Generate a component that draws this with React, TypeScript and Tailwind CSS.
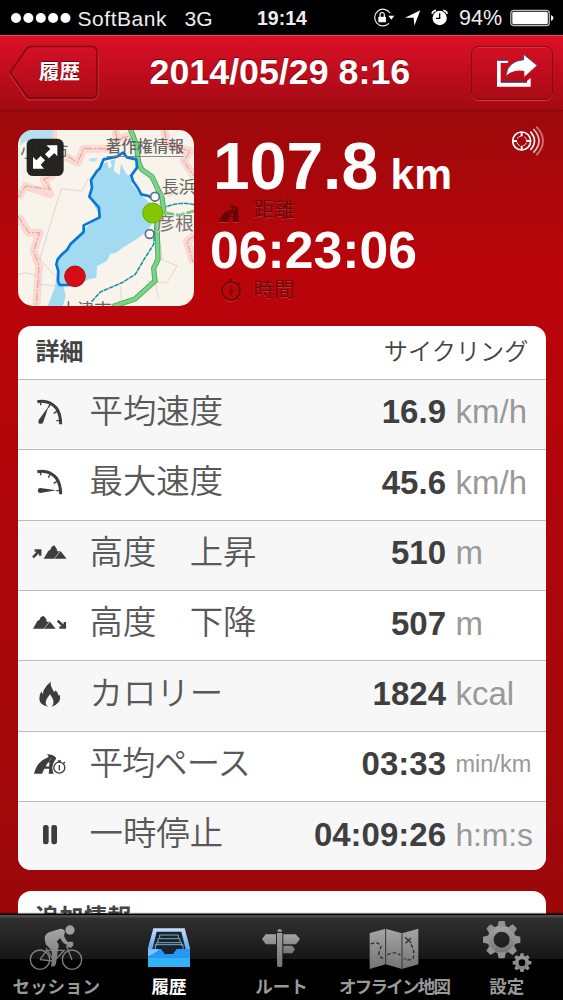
import React from "react";

const latin = "font-['Liberation_Sans','Noto_Sans_CJK_JP',sans-serif]";

function StatusBar() {
  return (
    <div className="flex h-[35px] shrink-0 items-center bg-black text-[#eeeeee]">
      <svg className="ml-[11px] h-[12px] w-[60px]" viewBox="0 0 60 12" fill="#fff">
        <circle cx="5" cy="6" r="5" />
        <circle cx="17.4" cy="6" r="5" />
        <circle cx="29.8" cy="6" r="5" />
        <circle cx="42.1" cy="6" r="5" />
        <circle cx="54.5" cy="6" r="5" />
      </svg>
      <div className="ml-[6.500px] w-[107px] pt-[2px] text-[21px] leading-[35px] tracking-[0.55px]">SoftBank</div>
      <div className="w-[72.500px] pt-[2px] text-[21px] leading-[35px]">3G</div>
      <div className="w-[115px] pt-[2px] text-[19.500px] leading-[35px] font-bold">19:14</div>
      <svg className="h-[20px] w-[78px]" viewBox="274 24 234 60">
        <path d="M328 39 A25 25 0 1 0 325 70" fill="none" stroke="#eee" strokeWidth="3.5" />
        <path d="M323 47 L341 47 L332 59Z" fill="#fff" />
        <rect x="293" y="50" width="23" height="17" rx="2" fill="#fff" />
        <path d="M298 51 V44 a6.500 6.500 0 0 1 13 0 V51" fill="none" stroke="#fff" strokeWidth="3.500" />
        <path d="M373 53 L419 31 L401 77 L399 53Z" fill="#fff" />
        <circle cx="477" cy="54" r="21.500" fill="#fff" />
        <path d="M477 40 V55 H466" fill="none" stroke="#000" strokeWidth="4" />
        <path d="M454 41 Q457 32 466 31 M488 31 Q497 32 500 41" fill="none" stroke="#fff" strokeWidth="5" />
      </svg>
      <div className="ml-[9px] w-[51px] pt-[2px] text-[21.500px] leading-[35px]">94%</div>
      <svg className="h-[18px] w-[44px]" viewBox="0 0 44 18">
        <rect x="0.8" y="1.3" width="38.5" height="15.4" rx="3" fill="none" stroke="#bbb" strokeWidth="1.3" />
        <rect x="2.300" y="2.800" width="35.500" height="12.400" rx="1.500" fill="#fff" />
        <path d="M41 6 Q43.500 7 43.500 9 T41 12Z" fill="#eee" />
      </svg>
    </div>
  );
}

function NavBar() {
  return (
    <div className="flex h-[76px] shrink-0 items-start border-t border-[#e84a5a] border-b-[1px] border-b-[#820a0f] bg-linear-to-b from-[#dc1027] to-[#a20a13]">
      <div className="mt-[9px] ml-[8px] grid h-[56px] w-[91px]">
        <svg className="h-[56px] w-[91px] [grid-area:1/1]" viewBox="0 0 91 56" fill="none">
          <defs>
            <linearGradient id="back" x1="0" y1="0" x2="0" y2="1">
              <stop offset="0" stopColor="#d51026" />
              <stop offset="1" stopColor="#aa0b15" />
            </linearGradient>
          </defs>
          <path d="M22 3 H84 Q90 3 90 9 V49 Q90 55 84 55 H22 Q19 55 17 52 L1.500 29 L17 6 Q19 3 22 3Z" stroke="#e04553" strokeOpacity="0.7" />
          <path d="M23 1.500 H83 Q89 1.500 89 7.500 V47 Q89 53 83 53 H23 Q20 53 18 50 L2 27.500 L18 4.500 Q20 1.500 23 1.500Z" fill="url(#back)" stroke="#7c0a12" strokeWidth="1.500" />
        </svg>
        <div className="z-10 pt-[13px] pl-[31px] text-[20.500px] leading-[28px] font-bold whitespace-nowrap text-white [grid-area:1/1] [text-shadow:0_-1px_1px_#77000a]">履歴</div>
      </div>
      <div className="mt-[15px] ml-[50.500px] w-[321.500px] text-[35.800px] leading-[42px] font-bold whitespace-nowrap text-white [text-shadow:0_-1px_1px_#77000a]">2014/05/29 8:16</div>
      <div className="mt-[10px] flex h-[54px] w-[82px] items-center justify-center rounded-[8px] border-[1.5px] border-[#850b13] shadow-[0_1px_0_#d03a48,inset_0_1px_0_#dc3043]">
        <svg className="mt-[-6px] ml-[9px] h-[34px] w-[42px]" viewBox="643 160 126 102">
          <path d="M681 181 H646 V261 H747 V234 L736 244 V249 H657 V190 H678Z" fill="#fff" />
          <path d="M647 182 H681 M658 246 H735" stroke="#2b416b" strokeWidth="3" />
          <path d="M673 229 Q677 184 726 180 V164 L766 197 L728 231 V214 Q695 208 673 229Z" fill="#fff" />
          <path d="M673 229 Q677 184 726 180 V164 L766 197" fill="none" stroke="#2b416b" strokeWidth="2.500" />
        </svg>
      </div>
    </div>
  );
}

function RouteMap() {
  return (
    <svg
      className="h-[176px] w-[176px] shrink-0 rounded-[15px] font-['Noto_Sans_CJK_JP',sans-serif]"
      viewBox="53 42 528 528"
    >
      <rect x="53" y="42" width="528" height="528" fill="#f8f4ec" />
      <g fill="none" strokeLinejoin="round">
        <path d="M158 42 L158 178 L130 190 L150 235 L75 210 L53 245 M195 122 L232 140 L250 98 L330 98 M53 300 L85 350 L118 350 L100 405 L116 450 L108 570 M345 42 L350 70 L405 55 M492 42 L500 85 L570 105 L550 135 L581 180 M581 360 L560 375 L578 440" stroke="#f9d9d2" strokeWidth="24" />
        <path d="M158 110 L158 178 L130 190 L150 220 L75 210 L53 245 M205 122 L232 140 L250 98 L330 98 M53 300 L85 350 L118 350 L100 405 L116 450 L108 570 M345 42 L350 70 L405 55 M492 42 L500 85 L570 105 L550 135 L581 180 M581 360 L560 375 L578 440" stroke="#e08e88" strokeWidth="2.500" strokeDasharray="24 5 6 5" />
        <path d="M265 185 L245 225 L183 218 L118 430 L165 480 M53 475 L75 470 L115 480 L118 505 L175 510 M480 380 L485 430 L530 450 L500 500 L440 495 M465 500 L475 550 M500 240 L581 215 M360 510 L365 570" stroke="#cdcac3" strokeWidth="2" />
      </g>
      <path d="M60 42 H158 V75 L120 70 L100 92 L75 75 L60 90Z M266 128 L290 125 L288 135 L268 137Z" fill="#b6e0f0" />
      <path d="M276 190 L290 160 L320 136 L326 158 L335 150 L330 135 L345 128 L340 165 L358 178 L362 143 L378 175 L395 180 L395 205 L425 240 L450 262 L455 325 L435 350 L405 372 L375 390 L345 412 L330 413 L320 435 L290 450 L288 485 L270 488 L225 510 L190 512 L196 540 L188 570 L142 570 L165 510 L172 435 L245 345 L298 300 L267 240Z" fill="#a2daf2" />
      <path d="M581 266 Q540 255 490 275 L465 320 L460 385 L430 432 L405 475 L365 500 L300 528 L262 570" fill="none" stroke="#9fd8dc" strokeWidth="5" />
      <path d="M581 266 Q540 255 490 275 L465 320 L460 385 L430 432 L405 475 L365 500 L300 528 L262 570" fill="none" stroke="#188b98" strokeWidth="4" strokeDasharray="13 4" />
      <g fill="none" stroke="#4cae5f">
        <path d="M389 36 L408 85 L415 140 L424 160 L455 182 L485 245 L490 282 L470 325 L473 430 L460 457 L464 495 L404 549 L335 572" strokeWidth="16" />
        <path d="M389 36 L408 85 L415 140 L424 160 L455 182 L485 245 L490 282 L470 325 L473 430 L460 457 L464 495 L404 549 L335 572" stroke="#7ed38a" strokeWidth="10" />
        <path d="M494 290 L535 298 L581 285" stroke="#78c77c" strokeWidth="9" strokeDasharray="28 5" />
      </g>
      <g fill="#67645f" stroke="#f8f4ec" strokeWidth="4" paintOrder="stroke">
        <text x="60" y="124" fontSize="48">小浜市</text>
        <text x="484" y="231" fontSize="51">長浜</text>
        <text x="178" y="601" fontSize="52">大津市</text>
      </g>
      <text x="468" y="341" fontSize="56" fill="#77736e" stroke="#f8f4ec" strokeWidth="3" paintOrder="stroke">彦根</text>
      <path d="M225 505 L205 507 L178 507 L173 495 L174 465 L168 445 L172 430 L182 418 L200 402 L210 385 L250 348 L250 328 L298 304 L296 275 L267 242 L275 215 L272 192 L290 165 L298 158 L310 130 L350 122 L368 110 L380 124 L408 130 L410 155 L393 178 L398 195 L412 215 L423 235 L445 240 L465 255" fill="none" stroke="#0878d4" strokeWidth="8" strokeLinejoin="round" />
      <text x="316" y="107" fontSize="47" fontWeight="500" fill="#55524e" fillOpacity="0.9">著作権情報</text>
      <path d="M319 121.500 H549" stroke="#77736e" strokeWidth="2.500" />
      <circle cx="464" cy="242" r="13" fill="#fff" stroke="#58708b" strokeWidth="5" />
      <circle cx="448" cy="354" r="13" fill="#fff" stroke="#58708b" strokeWidth="5" />
      <circle cx="457" cy="291" r="30" fill="#84c700" stroke="#6caa00" strokeWidth="3" />
      <circle cx="224" cy="481" r="31" fill="#d50b16" stroke="#b90b14" strokeWidth="3" />
      <rect x="79" y="68" width="111" height="112" rx="19" fill="#1f1d1b" fillOpacity="0.97" />
      <path d="M138 88 H171 V121 L162 111 L146 127 L134 115 L150 99Z M98 123 L108 133 L121 120 L134 133 L121 146 L131 158 H98Z" fill="#fff" />
    </svg>
  );
}

function RoadIcon() {
  return (
    <svg className="h-[19px] w-[24px]" viewBox="50 248 72 57">
      <path d="M55 302 Q66 272 89 267 Q101 262 91 256 L88 252 Q110 252 115 263 Q112 274 116 302 H97 L99 288 H88 L82 302Z" fill="#650407" />
      <path d="M91 283 L94 276 H99 L98 283Z M100 272 L105 262 L101 258" fill="#b20508" />
      <path d="M55 304 H82 M97 304 H116" stroke="#d64b4b" strokeWidth="2" />
    </svg>
  );
}

function StopwatchIcon() {
  return (
    <svg className="h-[26px] w-[24px]" viewBox="56 482 72 78" fill="none" stroke="#690407">
      <circle cx="92" cy="525" r="27" stroke="#d44040" strokeWidth="3" />
      <circle cx="92" cy="522" r="27" strokeWidth="5" />
      <path d="M92 487 V497 M87 487 H97 M111 503 L117 498" strokeWidth="5" />
      <path d="M92 506 V520" strokeWidth="3" />
      <path d="M86 520 H98 L92 534Z" fill="#690407" strokeWidth="1" />
    </svg>
  );
}

function GpsIcon() {
  return (
    <svg className="h-[32px] w-[36px]" viewBox="932 28 108 96" fill="none" stroke="#fff">
      <circle cx="967" cy="76" r="27" strokeWidth="5" />
      <path d="M967 48 V62 M967 90 V104 M939 76 H953 M981 76 H995" strokeWidth="6" />
      <circle cx="967" cy="76" r="15" strokeWidth="2.500" strokeDasharray="14 10" strokeDashoffset="-5" />
      <path d="M993 48 Q1018 76 993 103" strokeWidth="5" />
      <path d="M1002 40 Q1036 76 1002 111" strokeWidth="5" opacity="0.75" />
      <path d="M1011 33 Q1051 76 1011 119" strokeWidth="6" opacity="0.4" />
    </svg>
  );
}

function Summary() {
  return (
    <div className="flex h-[214.5px] shrink-0 pt-[19px] pl-[18px]">
      <RouteMap />
      <div className="ml-[16px] w-[292px]">
        <div className="ml-[3px] flex h-[72px] items-baseline font-bold whitespace-nowrap text-white">
          <span className="w-[177.500px] text-[66px] leading-[72px]">107.8</span>
          <span className="text-[42.500px] leading-[42px]">km</span>
        </div>
        <div className="ml-[7px] flex h-[22px] items-center text-[#650407]">
          <RoadIcon />
          <span className="mt-[-7px] ml-[12.500px] text-[20.500px] leading-[22px] font-[350] [text-shadow:0_1px_0_#c92b2b]">距離</span>
        </div>
        <div className="mt-[-1px] h-[55px] text-[51.700px] leading-[55px] font-bold whitespace-nowrap text-white">06:23:06</div>
        <div className="ml-[9px] flex h-[26px] items-center text-[#690407]">
          <StopwatchIcon />
          <span className="mt-[-2px] ml-[10.500px] text-[20.500px] leading-[22px] font-[350] [text-shadow:0_1px_0_#c92b2b]">時間</span>
        </div>
      </div>
      <div className="mt-[-5px] ml-[8px]">
        <GpsIcon />
      </div>
    </div>
  );
}

const gaugeArc = (
  <>
    <path d="M112 258 Q146 251 169 277 Q182 295 182 326" fill="none" stroke="#3d3d3d" strokeWidth="9" />
    <path d="M122 258 V269 M150 266 L145 276 M171 287 L161 293 M182 315 H169" stroke="#3d3d3d" strokeWidth="4" />
  </>
);

const icons: Record<string, { top: number; art: React.ReactNode }> = {
  average: {
    top: 250,
    art: (
      <>
        {gaugeArc}
        <path d="M116 313 L146 272 L129 321 Q121 328 115 321Z" fill="#3d3d3d" />
      </>
    ),
  },
  maximum: {
    top: 250,
    art: (
      <>
        {gaugeArc}
        <path d="M121 307 L169 314 L121 322 A7.500 7.500 0 0 1 121 307Z" fill="#3d3d3d" />
      </>
    ),
  },
  ascent: {
    top: 60,
    art: (
      <>
        <path d="M99 112 L118 93 M104 91.500 H120.500 V107" fill="none" stroke="#3d3d3d" strokeWidth="7.500" />
        <path d="M131 116 L145 93 L151 89 L155 80 L163 76 L170 86 L172 94 L182 94 L200 116Z" fill="#3d3d3d" />
        <path d="M163 116 L180 94" stroke="#eee" strokeWidth="2" />
      </>
    ),
  },
  descent: {
    top: 272,
    art: (
      <>
        <path d="M99 328 L112 305 L118 302 L122 294 L130 289 L139 299 L140 307 L150 307 L167 328Z" fill="#3d3d3d" />
        <path d="M132 328 L149 307" stroke="#eee" strokeWidth="2" />
        <path d="M173 304 L193 323 M178 324.500 H194.500 V308" fill="none" stroke="#3d3d3d" strokeWidth="7.500" />
      </>
    ),
  },
  calories: {
    top: 483,
    art: (
      <path d="M152 484 Q150 496 160 512 Q164 519 167 511 Q173 517 175 526 L180 526 Q185 550 155 560 Q169 548 150 523 Q127 552 145 560 Q118 554 118 536 Q118 525 124 514 L128 523 Q130 508 141 496 Q149 490 152 484Z" fill="#3d3d3d" />
    ),
  },
  pace: {
    top: 94,
    art: (
      <>
        <path d="M102 162 Q112 124 140 115 Q151 112 140 104 Q162 104 169 116 L162 127 Q153 143 161 162 H146 L148 147 H133 L126 162Z" fill="#3d3d3d" />
        <path d="M138 140 L144 129 H148 L147 140Z M149 123 L154 114" fill="#fff" stroke="#fff" strokeWidth="1" />
        <circle cx="178" cy="144" r="20" fill="#fff" />
        <circle cx="178" cy="144" r="16.500" fill="#fff" stroke="#3d3d3d" strokeWidth="4" />
        <path d="M178 124 V129 M173 124 H183 M191 131 L195 127 M178 136 V152" stroke="#3d3d3d" strokeWidth="4" />
      </>
    ),
  },
  pause: {
    top: 302,
    art: (
      <>
        <rect x="129" y="314" width="17" height="58" rx="7" fill="#3d3d3d" />
        <rect x="154" y="314" width="17" height="58" rx="7" fill="#3d3d3d" />
      </>
    ),
  },
};

const rows = [
  { icon: "average", label: "平均速度", value: "16.9", unit: "km/h" },
  { icon: "maximum", label: "最大速度", value: "45.6", unit: "km/h" },
  { icon: "ascent", label: "高度　上昇", value: "510", unit: "m" },
  { icon: "descent", label: "高度　下降", value: "507", unit: "m" },
  { icon: "calories", label: "カロリー", value: "1824", unit: "kcal" },
  { icon: "pace", label: "平均ペース", value: "03:33", unit: "min/km", unitSize: "text-[23.500px]", labelSpacing: "tracking-[-1px]" },
  { icon: "pause", label: "一時停止", value: "04:09:26", unit: "h:m:s", unitSize: "text-[32px] tracking-[-0.2px]" },
];

function DetailCard() {
  return (
    <div className="mx-[17.500px] h-[544px] shrink-0 overflow-hidden rounded-[13px] bg-white text-[#444]">
      <div className="flex h-[53.300px] items-center justify-between pr-[17px] pb-[1px] pl-[18px] text-[24px] leading-[36px]">
        <span className="font-bold">詳細</span>
        <span className="text-[24.200px] font-[350]">サイクリング</span>
      </div>
      {rows.map((row) => (
        <div key={row.icon} className="flex h-[70.400px] items-center border-t-[1.500px] border-[#bcbcbc] odd:bg-white even:bg-[#f7f7f7]">
          <svg className="mt-[-1px] ml-[8px] h-[30px] w-[48px] shrink-0" viewBox={`78 ${icons[row.icon].top} 144 90`}>
            {icons[row.icon].art}
          </svg>
          <span className={`mt-[-5px] ml-[16px] w-[180px] shrink-0 text-[33.400px] leading-[48px] font-[350] whitespace-nowrap text-[#585858] ${row.labelSpacing ?? ""}`}>{row.label}</span>
          <span className="mt-[-4px] ml-[26.500px] w-[150px] shrink-0 text-right text-[33px] leading-[40px] font-bold whitespace-nowrap text-[#3f3f3f]">{row.value}</span>
          <span className={`mt-[-4px] ml-[9.500px] leading-[40px] whitespace-nowrap text-[#999] ${row.unitSize ?? "text-[33px]"}`}>{row.unit}</span>
        </div>
      ))}
    </div>
  );
}

const gearTeeth = [0, 45, 90, 135, 180, 225, 270, 315];

function Gear({ x, y, r, hole }: { x: number; y: number; r: number; hole: number }) {
  const ring = (r * 0.76 + hole) / 2;
  return (
    <g transform={`translate(${x} ${y})`}>
      <circle r={ring} fill="none" stroke="url(#metal)" strokeWidth={r * 0.76 - hole} />
      {gearTeeth.map((a) => (
        <path key={a} transform={`rotate(${a}) scale(${r / 56})`} d="M-13 -38 L-9 -56 H9 L13 -38Z" fill="#929292" />
      ))}
    </g>
  );
}

function TabBar() {
  const tab = "flex w-[112.600px] shrink-0 flex-col items-center font-bold whitespace-nowrap text-[#999]";
  return (
    <div className="z-10 flex h-[86px] shrink-0 border-t border-black bg-[linear-gradient(#4b4b4b_0,#4b4b4b_2px,#303030_3px,#161616_44px,#000_44px)] shadow-[0_-1px_1px_#0008]">
      <div className={tab}>
        <svg className="mt-[8px] h-[50px] w-[54px]" viewBox="87 608 162 150">
          <defs>
            <linearGradient id="metal" gradientUnits="userSpaceOnUse" x1="0" y1="-40" x2="0" y2="60">
              <stop offset="0" stopColor="#a5a5a5" />
              <stop offset="1" stopColor="#666" />
            </linearGradient>
            <linearGradient id="rider" x1="0" y1="0" x2="0" y2="1">
              <stop offset="0" stopColor="#a5a5a5" />
              <stop offset="1" stopColor="#747474" />
            </linearGradient>
          </defs>
          <g fill="none" stroke="#808080" strokeWidth="4">
            <circle cx="120" cy="718" r="29" />
            <circle cx="216" cy="718" r="29" />
            <path d="M120 718 L140 690 H193 L162 722 L138 684 M120 718 L162 722 M216 718 L200 678 L215 680" />
          </g>
          <circle cx="210" cy="629" r="14" fill="#a0a0a0" />
          <path d="M134 654 Q135 641 147 636 L181 625 Q194 626 195 635 L192 648 L202 664 L218 664 Q224 676 213 681 Q205 684 201 674 L190 668 L180 653 L170 664 Q180 671 174 687 L168 731 Q164 742 153 738 L156 708 L154 689 L137 672Z" fill="url(#rider)" />
        </svg>
        <span className="mt-[3px] text-[17.500px] leading-[22px]">セッション</span>
      </div>
      <div className={tab}>
        <svg className="mt-[8px] h-[50px] w-[50px]" viewBox="432 608 150 150">
          <defs>
            <linearGradient id="tray" x1="0" y1="0" x2="0" y2="1">
              <stop offset="0" stopColor="#c9ddfa" />
              <stop offset="0.5" stopColor="#67aef3" />
              <stop offset="1" stopColor="#28aefa" />
            </linearGradient>
          </defs>
          <path d="M460 624 H554 L570 683 V740 H444 V683Z" fill="url(#tray)" />
          <path d="M470 634 H544 L557 687 H530 L520 702 H494 L483 687 H457Z" fill="#17242e" />
          <path d="M479 653 V644 H535 V653 M474 666 V655 H540 V666 M470 676 V667 H545 V676 M466 686 V673 H549 V686" fill="none" stroke="#8fc4d8" strokeWidth="2.500" />
          <path d="M444 687 H483 L494 702 H520 L530 687 H570 V740 H444Z" fill="#2597f6" />
          <path d="M444 713 H570 V740 H444Z" fill="#31b3fa" />
          <path d="M444 687 H478 Q466 700 444 707Z" fill="#82c5fb" />
        </svg>
        <span className="mt-[3px] text-[17.500px] leading-[22px] text-white">履歴</span>
      </div>
      <div className={tab}>
        <svg className="mt-[8px] h-[50px] w-[50px]" viewBox="51 38 150 150" fill="url(#rider)">
          <path d="M69 86 L80 72 H111 V102 H80Z M133 72 H170 L183 86 L171 102 H133Z M133 106 H159 L168 117 L160 129 H133Z" />
          <path d="M114 68 H130 V165 Q130 170 125 170 H119 Q114 170 114 165Z M115 64 Q115 57 122 56 Q129 57 129 64Z" />
        </svg>
        <span className="mt-[3px] text-[17.500px] leading-[22px]">ルート</span>
      </div>
      <div className={tab}>
        <svg className="mt-[8px] h-[50px] w-[50px]" viewBox="263 608 150 150">
          <path d="M265 638 L313 625 L362 639 L411 625 V732 L362 746 L313 732 L265 746Z" fill="url(#rider)" />
          <path d="M313 625 V732 M362 639 V746" stroke="#333" strokeWidth="3" />
          <path d="M268 671 Q291 662 299 678 L292 700 Q300 720 311 710 M318 704 Q337 691 357 704 M389 672 Q402 695 395 715 Q382 723 369 714" fill="none" stroke="#303030" strokeWidth="4" strokeDasharray="11 6" />
          <path d="M371 651 L390 668 M373 669 L389 653" stroke="#303030" strokeWidth="4" />
        </svg>
        <span className="mt-[3px] text-[17.500px] leading-[22px] tracking-[-1.750px]">オフライン地図</span>
      </div>
      <div className={tab}>
        <svg className="mt-[3px] h-[54px] w-[54px]" viewBox="596 596 162 162">
          <Gear x={661} y={661} r={56} hole={24} />
          <Gear x={722} y={730} r={28} hole={10} />
        </svg>
        <span className="mt-[4px] text-[17.500px] leading-[22px]">設定</span>
      </div>
    </div>
  );
}

export default function App() {
  return (
    <div className={`flex h-[1000px] w-[563px] flex-col overflow-hidden bg-black ${latin}`}>
      <StatusBar />
      <NavBar />
      <main className="flex h-[803px] shrink-0 flex-col overflow-hidden bg-linear-to-b from-[#9d090b] via-[#ba040a] via-20% to-[#9b080a]">
        <Summary />
        <DetailCard />
        <div className="mx-[17.500px] mt-[21.500px] h-[80px] shrink-0 rounded-t-[13px] bg-white pt-[9px] pl-[18px] text-[24px] leading-[36px] font-bold text-[#444]">追加情報</div>
      </main>
      <TabBar />
    </div>
  );
}
